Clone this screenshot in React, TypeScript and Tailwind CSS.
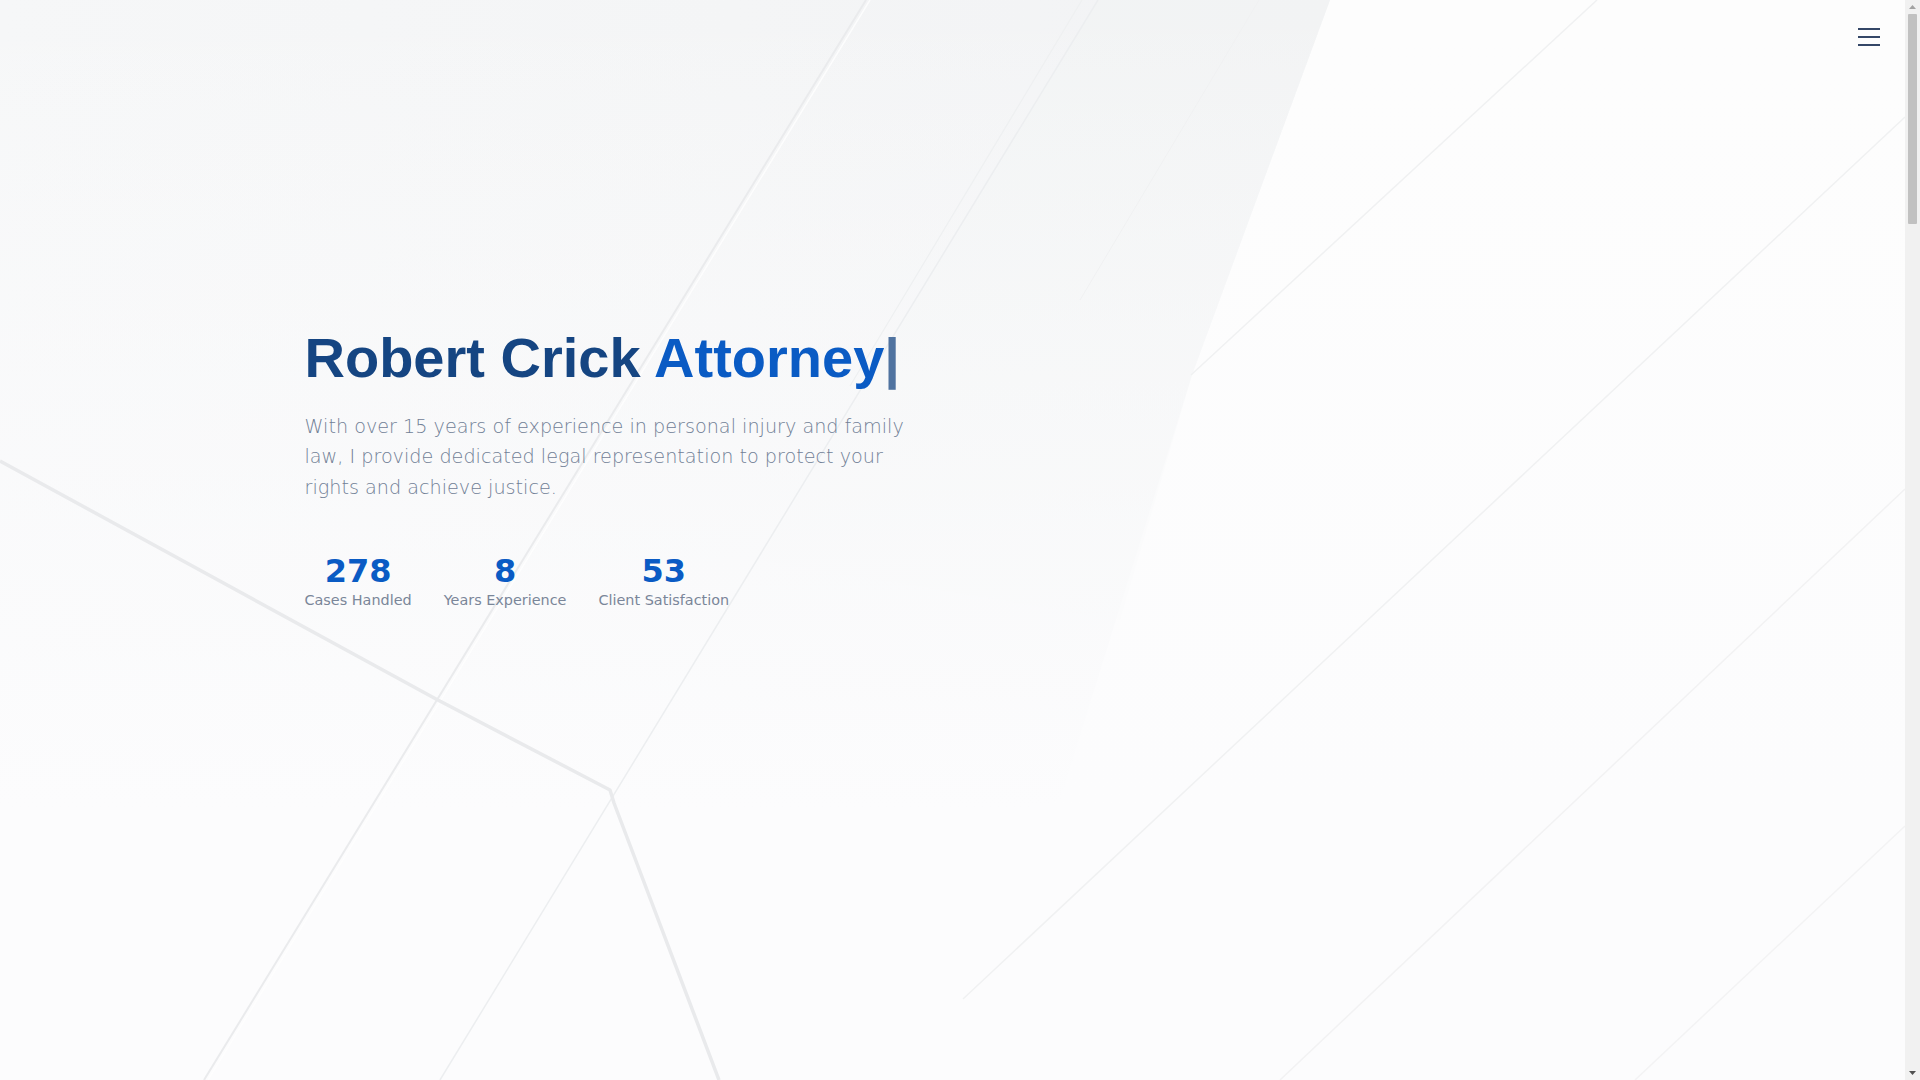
import { useState } from 'react';

const stats = [
  { value: '278', label: 'Cases Handled' },
  { value: '8', label: 'Years Experience' },
  { value: '53', label: 'Client Satisfaction' },
];

const practiceAreas = [
  { title: 'Personal Injury', text: 'Car accidents, slip and fall, workplace injuries and medical malpractice claims.' },
  { title: 'Family Law', text: 'Divorce, child custody, support agreements and adoption proceedings.' },
  { title: 'Estate Planning', text: 'Wills, trusts and probate handled with care for you and your family.' },
];

function HeroBackground() {
  return (
    <svg
      className="absolute inset-0 w-full h-full pointer-events-none"
      viewBox="0 0 1905 1080"
      preserveAspectRatio="none"
    >
      <defs>
        <linearGradient id="band" x1="0" y1="0" x2="1" y2="0">
          <stop offset="0" stopColor="#f6f7f8" />
          <stop offset="0.55" stopColor="#f4f5f6" />
          <stop offset="1" stopColor="#f2f3f5" />
        </linearGradient>
        <linearGradient id="fade" x1="0" y1="0" x2="0" y2="1">
          <stop offset="0" stopColor="#fdfdfd" stopOpacity="0" />
          <stop offset="0.35" stopColor="#fcfcfd" stopOpacity="0.5" />
          <stop offset="0.75" stopColor="#fcfcfd" stopOpacity="1" />
        </linearGradient>
      </defs>
      <rect x="0" y="0" width="1905" height="1080" fill="#fdfdfd" />
      <polygon points="0,0 1330,0 1192,375 1060,800 0,1080" fill="url(#band)" />
      <polygon points="1098,0 1330,0 1192,375 1120,620 760,560" fill="#f2f3f5" opacity="0.45" />
      <rect x="0" y="0" width="1905" height="1080" fill="url(#fade)" />

      {/* long diagonal creases */}
      <line x1="866" y1="0" x2="204" y2="1080" stroke="#eaebed" strokeWidth="2" />
      <line x1="870" y1="0" x2="208" y2="1080" stroke="#ffffff" strokeWidth="1.5" opacity="0.8" />
      <line x1="1098" y1="0" x2="440" y2="1080" stroke="#eceef0" strokeWidth="1.5" />
      <line x1="1082" y1="0" x2="850" y2="386" stroke="#eef0f1" strokeWidth="1.2" />
      <line x1="1259" y1="0" x2="1080" y2="300" stroke="#f0f1f2" strokeWidth="1" />

      {/* folded edge bottom-left */}
      <polyline
        points="0,461 436,699 610,790 614,803 719,1080"
        fill="none"
        stroke="#e9eaec"
        strokeWidth="3.5"
        strokeLinejoin="round"
      />

      {/* right side lines */}
      <line x1="1597" y1="0" x2="1191" y2="375" stroke="#f0f1f2" strokeWidth="1.5" />
      <line x1="1905" y1="117" x2="963" y2="999" stroke="#f0f1f2" strokeWidth="1.5" />
      <line x1="1905" y1="489" x2="1280" y2="1080" stroke="#f2f2f3" strokeWidth="1.5" />
      <line x1="1905" y1="826" x2="1635" y2="1080" stroke="#f3f3f4" strokeWidth="1.5" />
    </svg>
  );
}

function ScrollRail() {
  return (
    <div className="w-[15px] h-screen shrink-0 bg-[#f1f1f1] flex flex-col items-center">
      <div className="h-[14px] flex items-center justify-center">
        <svg width="7" height="4" viewBox="0 0 7 4">
          <polygon points="3.5,0 7,4 0,4" fill="#a3a3a3" />
        </svg>
      </div>
      <div className="w-[9px] h-[210px] rounded-[1px] bg-[#c1c1c1]" />
      <div className="flex-1" />
      <div className="h-[14px] flex items-center justify-center">
        <svg width="7" height="4" viewBox="0 0 7 4">
          <polygon points="0,0 7,0 3.5,4" fill="#505050" />
        </svg>
      </div>
    </div>
  );
}

export default function App() {
  const [menuOpen, setMenuOpen] = useState(false);

  return (
    <div className="flex h-screen bg-white text-[#1e293b]" style={{ fontFamily: '"DejaVu Sans", sans-serif' }}>
      <div className="relative flex-1 overflow-y-auto [scrollbar-width:none]">
        <button
          onClick={() => setMenuOpen(!menuOpen)}
          className="fixed top-5 right-[32px] z-20 p-2 flex flex-col gap-[6px]"
          aria-label="Open menu"
        >
          <span className="block w-[22px] h-[2px] bg-[#344767]" />
          <span className="block w-[22px] h-[2px] bg-[#344767]" />
          <span className="block w-[22px] h-[2px] bg-[#344767]" />
        </button>

        <section className="relative min-h-screen flex items-center pb-36 overflow-hidden">
          <HeroBackground />
          <div className="relative w-full max-w-[1296px] mx-auto">
            <h1 className="font-['Liberation_Sans',Arial,sans-serif] font-bold text-[56px] leading-[1.2] mb-5 text-[#154582]">
              Robert Crick <span className="text-[#0a5bc4]">Attorney</span>
              <span className="text-[#5073a0]">|</span>
            </h1>
            <p className="max-w-[620px] font-['DejaVu_Sans_ExtraLight','DejaVu_Sans',sans-serif] text-[1.2rem] leading-[1.6] font-extralight text-[#718096] mb-12">
              With over 15 years of experience in personal injury and family law, I provide dedicated legal
              representation to protect your rights and achieve justice.
            </p>
            <div className="flex gap-8">
              {stats.map((stat) => (
                <div key={stat.label} className="flex flex-col items-center">
                  <span className="text-[32px] leading-[1.2] font-bold text-[#0a5bc4]">{stat.value}</span>
                  <span className="text-[0.9rem] leading-[1.5] text-[#7a8699]">{stat.label}</span>
                </div>
              ))}
            </div>
          </div>
        </section>

        <section className="min-h-screen bg-[#f8fafc] flex items-center">
          <div className="w-full max-w-[1296px] mx-auto grid grid-cols-2 gap-16">
            <div>
              <h2 className="font-['Liberation_Sans',Arial,sans-serif] font-bold text-4xl text-[#154582] mb-6">About Me</h2>
              <p className="text-lg leading-relaxed text-[#718096]">
                I believe every client deserves a clear explanation of their options and an advocate who fights
                for the best possible outcome. My practice is built on honest advice and careful preparation.
              </p>
            </div>
            <div className="rounded-2xl bg-white border border-[#e5e7eb] p-10">
              <p className="text-[#718096]">Licensed to practice in state and federal courts.</p>
            </div>
          </div>
        </section>

        <section className="min-h-screen flex items-center">
          <div className="w-full max-w-[1296px] mx-auto">
            <h2 className="font-['Liberation_Sans',Arial,sans-serif] font-bold text-4xl text-[#154582] mb-10">Practice Areas</h2>
            <div className="grid grid-cols-3 gap-8">
              {practiceAreas.map((area) => (
                <div key={area.title} className="rounded-2xl border border-[#e5e7eb] p-8">
                  <h3 className="text-xl font-bold text-[#0a5bc4] mb-3">{area.title}</h3>
                  <p className="text-[#718096] leading-relaxed">{area.text}</p>
                </div>
              ))}
            </div>
          </div>
        </section>

        <section className="min-h-screen bg-[#f8fafc] flex items-center">
          <div className="w-full max-w-[1296px] mx-auto">
            <h2 className="font-['Liberation_Sans',Arial,sans-serif] font-bold text-4xl text-[#154582] mb-10">Testimonials</h2>
            <blockquote className="text-2xl font-light text-[#718096] max-w-3xl">
              “Robert guided us through a very difficult time with patience and professionalism.”
            </blockquote>
          </div>
        </section>

        <section className="min-h-screen flex items-center">
          <div className="w-full max-w-[1296px] mx-auto">
            <h2 className="font-['Liberation_Sans',Arial,sans-serif] font-bold text-4xl text-[#154582] mb-6">Contact</h2>
            <p className="text-lg text-[#718096]">Schedule a free consultation today.</p>
          </div>
        </section>
      </div>
      <ScrollRail />
    </div>
  );
}
